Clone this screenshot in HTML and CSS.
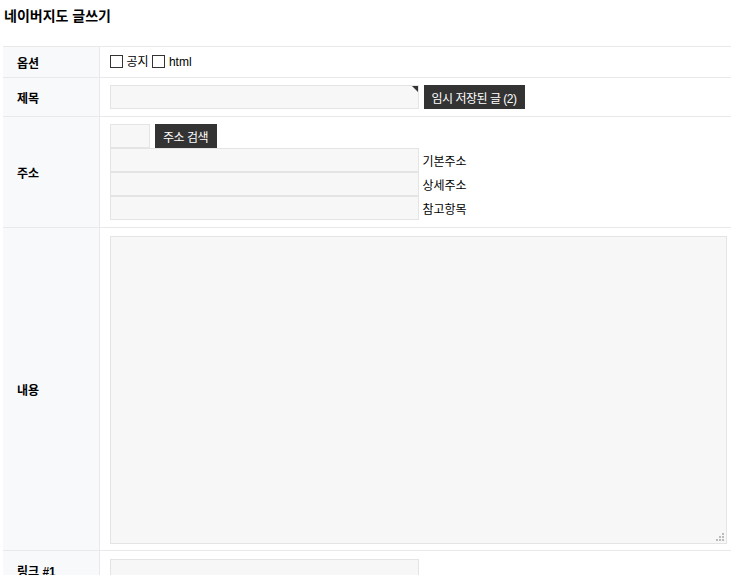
FILE: index.html
```html
<!DOCTYPE html>
<html lang="ko">
<head>
<meta charset="utf-8">
<title>네이버지도 글쓰기</title>
<link rel="stylesheet" href="styles.css">
</head>
<body>
<div class="page">
  <h1 class="title">네이버지도 글쓰기</h1>
  <table class="form">
    <tbody>
      <tr class="r-opt">
        <th>옵션</th>
        <td>
          <span class="chk"></span><span class="chk-lbl">공지</span>
          <span class="chk"></span><span class="chk-lbl">html</span>
        </td>
      </tr>
      <tr class="r-subj">
        <th>제목</th>
        <td>
          <div class="line">
            <span class="req-wrap"><input class="inp inp-long" type="text"><span class="req"></span></span>
            <button class="btn btn-temp">임시 저장된 글 (2)</button>
          </div>
        </td>
      </tr>
      <tr class="r-addr">
        <th>주소</th>
        <td>
          <div class="line"><input class="inp inp-zip" type="text"><button class="btn btn-addr">주소 검색</button></div>
          <div class="line"><input class="inp inp-long" type="text"><span class="lbl">기본주소</span></div>
          <div class="line"><input class="inp inp-long" type="text"><span class="lbl">상세주소</span></div>
          <div class="line"><input class="inp inp-long" type="text"><span class="lbl">참고항목</span></div>
        </td>
      </tr>
      <tr class="r-content">
        <th>내용</th>
        <td>
          <div class="ta-wrap">
            <textarea class="ta"></textarea>
            <svg class="grip" width="8" height="8" viewBox="0 0 8 8"><rect x="6" y="0" width="2" height="2" fill="#bbb"/><rect x="3" y="3" width="2" height="2" fill="#bbb"/><rect x="6" y="3" width="2" height="2" fill="#bbb"/><rect x="0" y="6" width="2" height="2" fill="#bbb"/><rect x="3" y="6" width="2" height="2" fill="#bbb"/><rect x="6" y="6" width="2" height="2" fill="#bbb"/></svg>
          </div>
        </td>
      </tr>
      <tr class="r-link">
        <th>링크 #1</th>
        <td><input class="inp inp-long" type="text"></td>
      </tr>
    </tbody>
  </table>
</div>
</body>
</html>
```
FILE: styles.css
```css
html, body {
  margin: 0;
  padding: 0;
  background: #fff;
}
body {
  font-family: "Liberation Sans", "Noto Sans CJK KR", sans-serif;
  font-size: 12px;
  color: #000;
  overflow: hidden;
}
.page {
  padding: 0 12px 0 3px;
}
.title {
  margin: 0;
  padding: 7px 0 0 1px;
  height: 46px;
  box-sizing: border-box;
  font-size: 14px;
  font-weight: bold;
  line-height: 18px;
}
.form {
  width: 728px;
  border-collapse: collapse;
  border-top: 1px solid #e9e9e9;
}
.form th {
  width: 96px;
  box-sizing: border-box;
  background: #f7f9fa;
  border-right: 1px solid #e9e9e9;
  border-bottom: 1px solid #e9e9e9;
  text-align: left;
  padding: 0 0 0 14px;
  font-weight: bold;
  font-size: 12px;
  vertical-align: middle;
}
.form td {
  border-bottom: 1px solid #e9e9e9;
  padding: 7px 4px 7px 10px;
  vertical-align: top;
}
.r-opt td {
  height: 31px;
  box-sizing: border-box;
  padding: 8px 4px 0 10px;
  line-height: 14px;
}
.chk {
  display: inline-block;
  width: 11px;
  height: 11px;
  border: 1px solid #333;
  background: #fff;
  vertical-align: -2px;
}
.chk-lbl {
  margin: 0 0 0 4px;
}
.line {
  display: flex;
  align-items: center;
  height: 24px;
}
.inp {
  box-sizing: border-box;
  height: 24px;
  border: 1px solid #e4e4e4;
  background: #f7f7f7;
  margin: 0;
  padding: 0 4px;
  font: inherit;
}
.inp-long {
  width: 309px;
}
.inp-zip {
  width: 40px;
}
.req-wrap {
  position: relative;
  display: inline-block;
  height: 24px;
}
.req {
  position: absolute;
  top: 1px;
  right: 1px;
  width: 0;
  height: 0;
  border-top: 6px solid #333;
  border-left: 6px solid transparent;
}
.btn {
  box-sizing: border-box;
  height: 24px;
  border: 0;
  background: #333;
  color: #fff;
  font: inherit;
  font-size: 12px;
  letter-spacing: -0.5px;
  white-space: nowrap;
  padding: 0;
  margin: 0 0 0 5px;
  cursor: pointer;
}
.btn-temp {
  width: 101px;
}
.btn-addr {
  width: 62px;
}
.lbl {
  margin-left: 4px;
}
.r-content td {
  padding: 8px 4px 6px 10px;
}
.ta-wrap {
  position: relative;
  width: 617px;
  height: 308px;
}
.ta {
  display: block;
  box-sizing: border-box;
  width: 617px;
  height: 308px;
  border: 1px solid #e4e4e4;
  background: #f7f7f7;
  resize: none;
  margin: 0;
}
.grip {
  position: absolute;
  right: 3px;
  bottom: 3px;
}
.r-link td {
  padding-top: 8px;
}
.r-link th {
  vertical-align: top;
  padding-top: 11px;
}
```
